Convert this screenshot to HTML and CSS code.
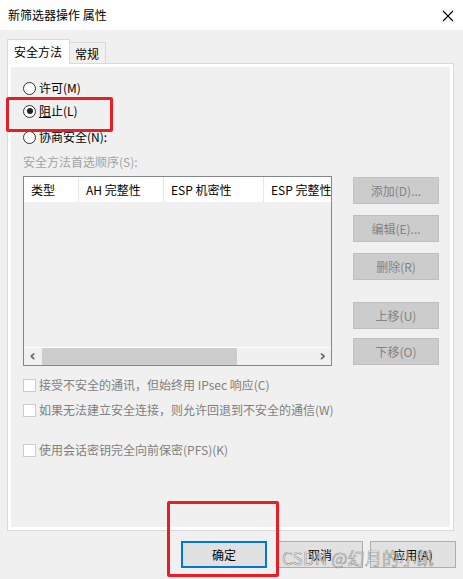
FILE: index.html
```html
<!DOCTYPE html>
<html lang="zh-CN">
<head>
    <meta charset="UTF-8">
    <title>新筛选器操作 属性</title>
    <link rel="stylesheet" href="styles.css">
</head>
<body>
    <div class="titlebar">
        <span class="title">新筛选器操作 属性</span>
        <svg class="close" width="12" height="12" viewBox="0 0 12 12">
            <path d="M1 1 L11 11 M11 1 L1 11" stroke="#000" stroke-width="1.1" fill="none"/>
        </svg>
    </div>

    <div class="dialog">
        <div class="tabs">
            <div class="tab active">安全方法</div>
            <div class="tab">常规</div>
        </div>

        <div class="panel">
            <div class="radio-row">
                <span class="radio"></span><span>许可(M)</span>
            </div>
            <div class="radio-row second">
                <span class="radio checked"></span><span><u>阻</u>止(L)</span>
            </div>
            <div class="radio-row third">
                <span class="radio"></span><span>协商安全(N):</span>
            </div>
            <div class="group-label">安全方法首选顺序(S):</div>

            <div class="methods">
                <div class="listbox">
                    <div class="list-header">
                        <div class="col c1">类型</div>
                        <div class="col c2">AH 完整性</div>
                        <div class="col c3">ESP 机密性</div>
                        <div class="col c4">ESP 完整性</div>
                    </div>
                    <div class="list-body"></div>
                    <div class="hscroll">
                        <span class="arrow">&#8249;</span>
                        <div class="track"><div class="thumb"></div></div>
                        <span class="arrow">&#8250;</span>
                    </div>
                </div>
                <div class="side-buttons">
                    <button class="btn-disabled">添加(D)...</button>
                    <button class="btn-disabled">编辑(E)...</button>
                    <button class="btn-disabled">删除(R)</button>
                    <button class="btn-disabled spaced">上移(U)</button>
                    <button class="btn-disabled last">下移(O)</button>
                </div>
            </div>

            <div class="check-row">
                <span class="checkbox"></span><span>接受不安全的通讯，但始终用 IPsec 响应(C)</span>
            </div>
            <div class="check-row">
                <span class="checkbox"></span><span>如果无法建立安全连接，则允许回退到不安全的通信(W)</span>
            </div>
            <div class="check-row far">
                <span class="checkbox"></span><span>使用会话密钥完全向前保密(PFS)(K)</span>
            </div>
        </div>

        <div class="footer">
            <button class="btn default">确定</button>
            <button class="btn">取消</button>
            <button class="btn">应用(A)</button>
        </div>
    </div>

    <div class="mark mark-top"></div>
    <div class="mark mark-bottom"></div>
    <div class="watermark">CSDN @幻月的小凯</div>
</body>
</html>
```

FILE: styles.css
```css
body {
    margin: 0;
    width: 463px;
    height: 579px;
    overflow: hidden;
    background: #f0f0f0;
    font-family: "Noto Sans CJK SC", "Noto Sans", sans-serif;
    font-size: 12px;
    color: #000;
    position: relative;
}
.titlebar {
    height: 30px;
    background: #fff;
    display: flex;
    align-items: center;
    justify-content: space-between;
    padding: 0 9px 0 8px;
}
.title {
    font-size: 12px;
    line-height: 14px;
}
.close {
    display: block;
    margin-top: 1px;
}
.dialog {
    padding: 9px 0 0 7px;
}
.tabs {
    display: flex;
    align-items: flex-end;
    height: 24px;
    position: relative;
    z-index: 1;
}
.tab {
    height: 21px;
    padding: 0 6px 0 5px;
    border: 1px solid #d9d9d9;
    border-bottom: none;
    border-left: none;
    box-sizing: border-box;
    display: flex;
    align-items: center;
    background: #f0f0f0;
}
.tab.active {
    height: 25px;
    margin-bottom: -1px;
    border-left: 1px solid #d9d9d9;
    background: #fff;
    padding: 0 7px 2px 6px;
    font-size: 12px;
}
.panel {
    width: 447px;
    height: 468px;
    box-sizing: border-box;
    border: 1px solid #d9d9d9;
    box-shadow: inset 0 0 0 3px #fff;
    padding: 17px 0 0 15px;
}
.radio-row, .check-row {
    display: flex;
    align-items: center;
    height: 14px;
    line-height: 14px;
}
.radio-row.second {
    margin-top: 9px;
}
.radio-row.third {
    margin-top: 12px;
}
.radio {
    width: 11px;
    height: 11px;
    border: 1px solid #333;
    border-radius: 50%;
    background: #fff;
    margin-right: 3px;
    position: relative;
    flex: none;
}
.radio.checked::after {
    content: "";
    position: absolute;
    left: 2.5px;
    top: 2.5px;
    width: 6px;
    height: 6px;
    border-radius: 50%;
    background: #222;
}
.group-label {
    margin-top: 11px;
    height: 14px;
    line-height: 14px;
    color: #a3a3a3;
}
.methods {
    display: flex;
    margin-top: 7px;
}
.listbox {
    width: 309px;
    height: 190px;
    box-sizing: border-box;
    border: 1px solid #828790;
    display: flex;
    flex-direction: column;
}
.list-header {
    display: flex;
    height: 25px;
    background: #fff;
    flex: none;
    overflow: hidden;
}
.col {
    display: flex;
    align-items: center;
    padding-left: 7px;
    border-right: 1px solid #e5e5e5;
    box-sizing: border-box;
    white-space: nowrap;
    flex: none;
}
.c1 { width: 55px; }
.c2 { width: 85px; }
.c3 { width: 100px; }
.c4 { width: 80px; border-right: none; }
.list-body {
    flex: 1;
    border-bottom: 1px solid #fff;
}
.hscroll {
    height: 17px;
    display: flex;
    align-items: center;
    flex: none;
}
.arrow {
    width: 17px;
    text-align: center;
    font-size: 15px;
    font-weight: bold;
    color: #606060;
    line-height: 17px;
    font-family: "DejaVu Sans", sans-serif;
}
.track {
    flex: 1;
    height: 17px;
}
.thumb {
    width: 195px;
    height: 17px;
    margin-left: 1px;
    background: #cdcdcd;
}
.side-buttons {
    display: flex;
    flex-direction: column;
    margin-left: 21px;
    padding-top: 1px;
}
.btn-disabled {
    width: 86px;
    height: 27px;
    margin-bottom: 11px;
    background: #cccccc;
    border: 1px solid #bfbfbf;
    color: #838383;
    font-family: inherit;
    font-size: 12px;
    padding: 0;
}
.btn-disabled.spaced {
    margin-top: 11px;
    margin-bottom: 9px;
}
.btn-disabled.last {
    margin-bottom: 0;
}
.check-row {
    margin-top: 12px;
    color: #7f7f7f;
}
.check-row + .check-row {
    margin-top: 11px;
}
.check-row.far {
    margin-top: 26px;
}
.checkbox {
    width: 11px;
    height: 11px;
    border: 1px solid #cccccc;
    background: #fff;
    margin-right: 3px;
    flex: none;
}
.footer {
    display: flex;
    justify-content: flex-end;
    padding: 10px 7px 0 0;
    gap: 7px;
}
.btn {
    width: 86px;
    height: 27px;
    background: #e1e1e1;
    border: 1px solid #adadad;
    font-family: inherit;
    font-size: 12px;
    color: #000;
    padding: 0;
}
.btn.default {
    border: 2px solid #0078d7;
    margin-right: 3px;
}
.mark {
    position: absolute;
    border: 3px solid #ec1c24;
    border-radius: 2px;
    box-sizing: border-box;
}
.mark-top {
    left: 6px;
    top: 97px;
    width: 107px;
    height: 35px;
}
.mark-bottom {
    left: 167px;
    top: 501px;
    width: 112px;
    height: 76px;
}
.watermark {
    position: absolute;
    left: 282px;
    top: 547px;
    font-size: 17px;
    line-height: 22px;
    color: rgba(255, 255, 255, 0.55);
    -webkit-text-stroke: 0.7px rgba(90, 90, 90, 0.55);
    white-space: nowrap;
    letter-spacing: 0.2px;
}
```
